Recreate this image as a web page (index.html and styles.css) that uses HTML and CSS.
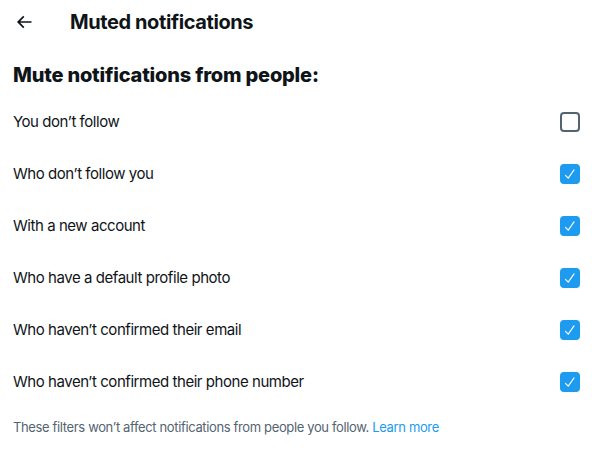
FILE: index.html
```html
<!DOCTYPE html>
<html>
<head>
<meta charset="utf-8">
<link rel="stylesheet" href="styles.css">
</head>
<body>
<div class="page">
  <header class="topbar">
    <div class="back">
      <svg viewBox="0 0 24 24" width="20" height="20"><path d="M7.414 13l5.043 5.04-1.414 1.42L3.586 12l7.457-7.46 1.414 1.42L7.414 11H21v2H7.414z" fill="#0f1419"/></svg>
    </div>
    <h1 class="title">Muted notifications</h1>
  </header>
  <h2 class="heading">Mute notifications from people:</h2>
  <div class="list">
    <label class="row"><span>You don’t follow</span><span class="box"></span></label>
    <label class="row"><span>Who don’t follow you</span><span class="box on"><svg viewBox="0 0 24 24"><path d="M9 20c-.264 0-.52-.104-.707-.293l-4.785-4.785c-.39-.39-.39-1.023 0-1.414s1.023-.39 1.414 0l3.946 3.945L18.075 4.41c.32-.45.94-.558 1.395-.24.45.318.56.942.24 1.394L9.817 19.577c-.17.24-.438.395-.732.42-.028.002-.057.003-.085.003z" fill="#fff"/></svg></span></label>
    <label class="row"><span>With a new account</span><span class="box on"><svg viewBox="0 0 24 24"><path d="M9 20c-.264 0-.52-.104-.707-.293l-4.785-4.785c-.39-.39-.39-1.023 0-1.414s1.023-.39 1.414 0l3.946 3.945L18.075 4.41c.32-.45.94-.558 1.395-.24.45.318.56.942.24 1.394L9.817 19.577c-.17.24-.438.395-.732.42-.028.002-.057.003-.085.003z" fill="#fff"/></svg></span></label>
    <label class="row"><span>Who have a default profile photo</span><span class="box on"><svg viewBox="0 0 24 24"><path d="M9 20c-.264 0-.52-.104-.707-.293l-4.785-4.785c-.39-.39-.39-1.023 0-1.414s1.023-.39 1.414 0l3.946 3.945L18.075 4.41c.32-.45.94-.558 1.395-.24.45.318.56.942.24 1.394L9.817 19.577c-.17.24-.438.395-.732.42-.028.002-.057.003-.085.003z" fill="#fff"/></svg></span></label>
    <label class="row"><span>Who haven’t confirmed their email</span><span class="box on"><svg viewBox="0 0 24 24"><path d="M9 20c-.264 0-.52-.104-.707-.293l-4.785-4.785c-.39-.39-.39-1.023 0-1.414s1.023-.39 1.414 0l3.946 3.945L18.075 4.41c.32-.45.94-.558 1.395-.24.45.318.56.942.24 1.394L9.817 19.577c-.17.24-.438.395-.732.42-.028.002-.057.003-.085.003z" fill="#fff"/></svg></span></label>
    <label class="row"><span>Who haven’t confirmed their phone number</span><span class="box on"><svg viewBox="0 0 24 24"><path d="M9 20c-.264 0-.52-.104-.707-.293l-4.785-4.785c-.39-.39-.39-1.023 0-1.414s1.023-.39 1.414 0l3.946 3.945L18.075 4.41c.32-.45.94-.558 1.395-.24.45.318.56.942.24 1.394L9.817 19.577c-.17.24-.438.395-.732.42-.028.002-.057.003-.085.003z" fill="#fff"/></svg></span></label>
  </div>
  <p class="note">These filters won’t affect notifications from people you follow. <a href="#">Learn more</a></p>
</div>
</body>
</html>
```
FILE: styles.css
```css
* { box-sizing: border-box; }
html, body { margin: 0; padding: 0; background: #fff; }
body { font-family: Inter, "Noto Sans", sans-serif; color: #0f1419; }
.page { width: 592px; }
.topbar { height: 44px; display: flex; align-items: center; padding: 0 13px; }
.back { width: 57px; display: flex; align-items: center; }
.back svg { margin-left: 1px; }
.title { margin: 0; font-size: 20px; font-weight: 700; letter-spacing: -0.4px; }
.heading { margin: 0; padding: 19px 13px 0; height: 52px; font-size: 20px; font-weight: 800; line-height: 24px; letter-spacing: -0.2px; }
.list { display: flex; flex-direction: column; }
.row { height: 52px; display: flex; align-items: center; justify-content: space-between; padding: 0 12px 0 13px; font-size: 15px; line-height: 20px; letter-spacing: -0.45px; }
.box { width: 20px; height: 20px; border: 2px solid #536471; border-radius: 4px; display: flex; align-items: center; justify-content: center; }
.box.on { background: #1d9bf0; border-color: #1d9bf0; }
.box svg { width: 14px; height: 14px; }
.note { margin: 0; padding: 11px 13px 0; font-size: 13px; line-height: 16px; color: #536471; letter-spacing: -0.36px; }
.note a { color: #1d9bf0; text-decoration: none; }
```
